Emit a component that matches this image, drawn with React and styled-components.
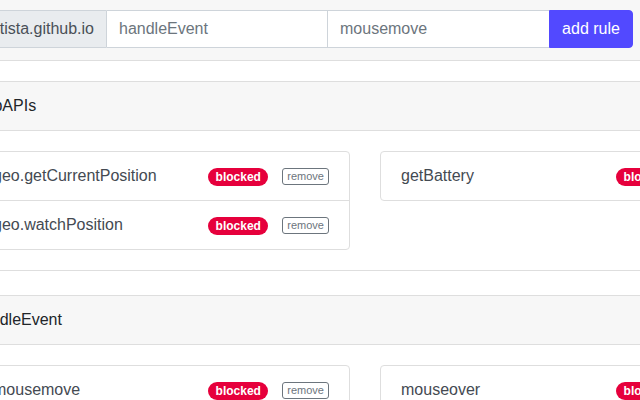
import React from "react";
import styled, { createGlobalStyle } from "styled-components";

const Global = createGlobalStyle`
  html, body { margin: 0; padding: 0; height: 400px; overflow: hidden; background: #fff; }
  body { font-family: "Liberation Sans", Arial, sans-serif; }
  * { box-sizing: border-box; }
`;

const Page = styled.div`
  margin-left: -28px;
  width: 1100px;
`;

const TopBar = styled.div`
  background: #f7f7f7;
  border-bottom: 1px solid #dedede;
  padding: 10px 0 12px 15px;
`;

const Form = styled.form`
  display: flex;
  height: 38px;
  font-size: 16px;
  line-height: 24px;
`;

const Addon = styled.span`
  display: flex;
  align-items: center;
  width: 120px;
  padding: 0 12px;
  background: #e9ecef;
  border: 1px solid #ced4da;
  border-radius: 4px 0 0 4px;
  color: #495057;
  white-space: nowrap;
  overflow: hidden;
  justify-content: flex-end;
`;

const Field = styled.input`
  width: 221px;
  height: 38px;
  padding: 0 12px;
  border: 1px solid #ced4da;
  border-left: 0;
  border-right: ${(p) => (p.$last ? "0" : "1px solid #ced4da")};
  background: #fff;
  font: inherit;
  color: #6c757d;
  outline: none;
`;

const AddButton = styled.button`
  width: 84px;
  height: 38px;
  padding: 0 12px;
  border: 1px solid #5249ff;
  border-radius: 0 4px 4px 0;
  background: #5249ff;
  color: #fff;
  font: inherit;
  white-space: nowrap;
`;

const Section = styled.section`
  margin-top: ${(p) => p.$gap}px;
  border-top: 1px solid #dedede;
  border-bottom: 1px solid #dedede;
`;

const Header = styled.h2`
  margin: 0;
  padding: 12px 0 12px 1px;
  background: #f7f7f7;
  border-bottom: 1px solid #dedede;
  font-size: 16px;
  line-height: 24px;
  font-weight: 400;
  color: #212529;
`;

const Body = styled.div`
  padding: 20px 0;
  display: grid;
  grid-template-columns: 378px 378px;
  column-gap: 30px;
  align-items: start;
`;

const Card = styled.ul`
  margin: 0;
  padding: 0;
  list-style: none;
  border: 1px solid #dedede;
  border-radius: 4px;
`;

const Row = styled.li`
  display: flex;
  align-items: center;
  padding: 12px 20px;
  font-size: 16px;
  line-height: 24px;
  color: #444a52;
  & + & { border-top: 1px solid #dedede; }
`;

const Name = styled.span`
  flex: 1;
  white-space: nowrap;
`;

const Badge = styled.span`
  display: inline-block;
  margin-top: 2px;
  padding: 3px 7.4px;
  border-radius: 10rem;
  background: #e6003c;
  color: #fff;
  font-size: 12px;
  font-weight: 700;
  line-height: 12px;
`;

const Remove = styled.button`
  margin-left: 14px;
  margin-top: 1px;
  padding: 1px 4px;
  height: 17px;
  border: 1px solid #6c757d;
  border-radius: 3px;
  background: #fff;
  color: #6c757d;
  font-family: inherit;
  font-size: 11px;
  line-height: 13px;
`;

const data = [
  {
    title: "webAPIs",
    gap: 20,
    cols: [
      ["geo.getCurrentPosition", "geo.watchPosition"],
      ["getBattery"],
    ],
  },
  {
    title: "handleEvent",
    gap: 24,
    cols: [["mousemove", "click"], ["mouseover", "scroll"]],
  },
];

export default function App() {
  return (
    <>
      <Global />
      <Page>
        <TopBar>
          <Form onSubmit={(e) => e.preventDefault()}>
            <Addon>tista.github.io</Addon>
            <Field defaultValue="handleEvent" />
            <Field defaultValue="mousemove" $last />
            <AddButton type="submit">add rule</AddButton>
          </Form>
        </TopBar>
        {data.map((s) => (
          <Section key={s.title} $gap={s.gap}>
            <Header>{s.title}</Header>
            <Body>
              {s.cols.map((items, i) => (
                <Card key={i}>
                  {items.map((it) => (
                    <Row key={it}>
                      <Name>{it}</Name>
                      <Badge>blocked</Badge>
                      <Remove type="button">remove</Remove>
                    </Row>
                  ))}
                </Card>
              ))}
            </Body>
          </Section>
        ))}
      </Page>
    </>
  );
}
